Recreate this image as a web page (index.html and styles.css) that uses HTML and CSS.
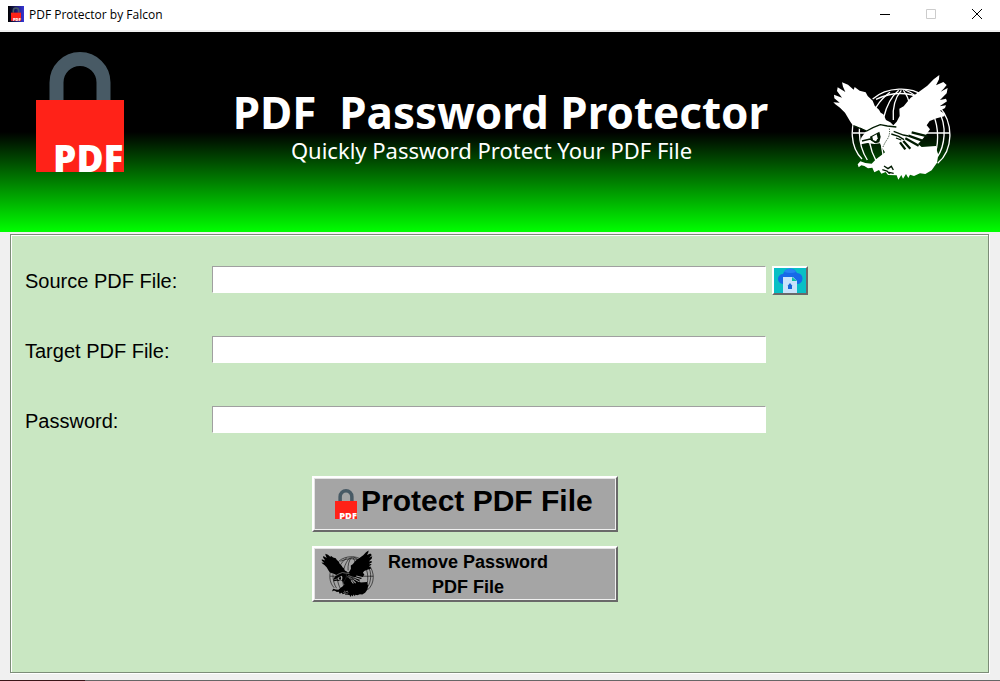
FILE: index.html
```html
<!DOCTYPE html>
<html lang="en">
<head>
<meta charset="utf-8">
<meta name="viewport" content="width=device-width, initial-scale=1">
<title>PDF Protector by Falcon</title>
<link rel="stylesheet" href="styles.css">
</head>
<body>
<svg class="sprite" aria-hidden="true">
  <symbol id="lock" viewBox="0 0 88 120" overflow="visible">
    <path d="M20.500 50V30.500a23.500 23.500 0 0 1 47 0V50" fill="none" stroke="#485a65" stroke-width="14"/>
    <path d="M0 48h88v72H0z" fill="#ff2218"/>
    <text class="lock-text" x="17" y="120">PDF</text>
  </symbol>
  <symbol id="falcon" viewBox="39 42 354 324">
    <g fill="none" stroke="currentColor" stroke-width="4">
      <path d="M126 297C91 262 87 197 116 153M158 117C202 79 274 80 307 106M358 140C402 190 400 270 353 310" />
      <path d="M142 300C110 250 112 180 136 143M168 302C134 240 138 150 210 97M190 290C172 210 195 125 236 91M220 180C217 145 225 113 244 91M250 91C261 105 267 120 268 135M255 90C290 103 302 120 306 134M340 165C358 205 356 260 341 290M354 150C384 198 373 260 352 291"/>
      <path d="M99 219H390M168 118Q240 84 306 116"/>
    </g>
    <path fill="currentColor" d="M66 67L84 74L101 89L104 81L119 92L137 97L143 108L158 122L164 137L177 149L182 158L190 163L198 180L211 187L220 196L230 185L239 168L238 146L251 139L272 113L292 99L322 77L341 58L358 45L357 58L348 76L370 66L380 75L371 86L362 95L383 84L380 100L360 120L378 116L381 124L359 139L378 136L375 144L360 152L375 162L373 169L350 175L329 183L320 196L330 208L320 222L306 239L294 252L305 261L348 258L351 273L355 284L351 308L335 331L316 342L300 340L282 348L270 344L265 354L258 342L249 356L244 345L235 359L230 346L204 345L197 336L184 341L177 330L163 337L157 323L144 325L133 318L124 316L116 322L113 313L121 304L136 309L155 311L168 298L184 286L195 277L185 262L180 250L163 252L142 249L123 253L121 241L125 231L139 213L122 203L100 198L91 185L75 158L60 143L46 133L40 127L59 128L43 115L42 104L66 113L51 93L53 82L76 96L69 80Z"/>
    <g fill="none" stroke="var(--detail)" stroke-width="4">
      <path d="M100 197L140 213Q158 202 181 194L202 198L229 201"/>
      <path d="M208 206Q211 225 201 239Q194 249 188 263" stroke-dasharray="3 4" stroke-width="3"/>
      <path d="M214 222L236 229L252 239M221 214L250 225L265 228M228 234L244 240"/>
      <path d="M126 243L150 237L166 247"/>
      <path d="M240 247L256 268M250 243L271 266M256 235L296 257M265 227L315 245M275 217L323 229" stroke-width="7"/>
      <path d="M192 318l12 8 10-7 6 11M187 329l14 4 8 8M207 337l14 3"/>
    </g>
    <path fill="var(--detail)" d="M150 230L178 215L182 230L178 247L167 250L152 240Z"/>
    <path fill="currentColor" d="M157 230L170 223L173 235L168 244L159 240Z"/>
  </symbol>
</svg>

<header class="titlebar">
  <svg class="app-icon" viewBox="0 0 16 16" aria-hidden="true">
    <defs><linearGradient id="appGradient"><stop offset="0"/><stop offset="1" stop-color="#3636d8"/></linearGradient></defs>
    <path fill="url(#appGradient)" d="M0 0h16v16H0z"/>
    <use href="#lock" x="3" y="1" width="10" height="14"/>
  </svg>
  <span class="window-title">PDF Protector by Falcon</span>
  <div class="window-controls">
    <button type="button" aria-label="Minimize"><svg viewBox="0 0 10 10"><path d="M0 5.500h10"/></svg></button>
    <button type="button" aria-label="Maximize" disabled><svg viewBox="0 0 10 10"><path d="M.5.5h9v9h-9z"/></svg></button>
    <button type="button" aria-label="Close"><svg viewBox="0 0 10 10"><path d="M0 0l10 10M10 0L0 10"/></svg></button>
  </div>
</header>

<section class="banner">
  <svg class="banner-lock" aria-hidden="true"><use href="#lock"/></svg>
  <div class="banner-copy">
    <h1>PDF&nbsp; Password Protector</h1>
    <p>Quickly Password Protect Your PDF File</p>
  </div>
  <svg class="banner-falcon" aria-hidden="true"><use href="#falcon"/></svg>
</section>

<main class="content">
  <form class="panel">
    <label for="source">Source PDF File:</label>
    <input id="source" type="text">
    <button class="browse" type="button" aria-label="Choose source file">
      <svg viewBox="0 0 32 25" aria-hidden="true">
        <path fill="#08bfc5" d="M0 0h32v25H0z"/>
        <path fill="#1769e8" d="M9 16a5 5 0 0 1 0-10 7.500 7.500 0 0 1 14-1 5.500 5.500 0 0 1 0 11z"/>
        <path fill="#2784f3" d="M10 4a7 7 0 0 1 12 0q-5 2-12 0z"/>
        <path fill="#c9e3fb" d="M9 9h10l4 4v12H9z"/>
        <path fill="#08bfa5" d="M18 9l5 4h-5z"/>
        <path fill="#1765d8" d="M16 15l2.500 3H18v3h-4v-3h-.5z"/>
      </svg>
    </button>
    <label for="target">Target PDF File:</label>
    <input id="target" type="text">
    <label for="password">Password:</label>
    <input id="password" type="password">
    <div class="actions">
      <button class="action protect" type="button">
        <svg class="button-lock" aria-hidden="true"><use href="#lock"/></svg>
        <span>Protect PDF File</span>
      </button>
      <button class="action remove" type="button">
        <svg class="button-falcon" aria-hidden="true"><use href="#falcon"/></svg>
        <span>Remove Password<br>PDF File</span>
      </button>
    </div>
  </form>
</main>
<div class="bottom-edge"></div>
</body>
</html>
```
FILE: styles.css
```css
* { box-sizing: border-box; }

body {
  margin: 0;
  min-height: 100vh;
  display: flex;
  flex-direction: column;
  background: #f0f0f0;
  color: #000;
  font-family: "Liberation Sans", Arial, sans-serif;
}

.sprite { position: absolute; width: 0; height: 0; }

.lock-text {
  font: 800 37px "Open Sans", sans-serif;
  fill: #fff;
}

.titlebar {
  display: flex;
  align-items: center;
  height: 32px;
  padding-left: 8px;
  padding-bottom: 2px;
  background: #fff;
  border-bottom: 2px solid #f0f0f0;
}
.app-icon { width: 16px; height: 16px; }
.window-title {
  margin-left: 5px;
  padding-top: 2px;
  font: 12px/16px "Open Sans", sans-serif;
}
.window-controls { display: flex; margin-left: auto; }
.window-controls button {
  display: grid;
  place-items: center;
  width: 46px;
  height: 28px;
  padding: 0;
  border: 0;
  background: none;
}
.window-controls svg {
  width: 10px;
  height: 10px;
  fill: none;
  stroke: #000;
  overflow: visible;
}
.window-controls button:disabled svg { stroke: #ccc; }

.banner {
  display: grid;
  grid-template-columns: 118px 1fr 118px;
  height: 200px;
  padding: 20px 49px 0 36px;
  background: linear-gradient(#000 50%, #0f0);
  color: #fff;
}
.banner-lock { width: 88px; height: 120px; overflow: visible; }
.banner-copy {
  padding: 33px 0 0 14px;
  text-align: center;
  font-family: "Noto Sans", sans-serif;
}
.banner h1 {
  margin: 0;
  font-size: 44px;
  font-weight: 700;
  line-height: 54px;
}
.banner p {
  margin: 0;
  padding-right: 18px;
  font-size: 22px;
  line-height: 22px;
}
.banner-falcon {
  --detail: #001a00;
  width: 118px;
  height: 108px;
  margin-top: 22px;
}

.content {
  flex: 1;
  display: flex;
  padding: 2px 11px 7px 10px;
}
.panel {
  flex: 1;
  display: grid;
  grid-template-columns: 181px minmax(0, 554px) 36px;
  grid-auto-rows: 30px;
  align-content: start;
  align-items: start;
  gap: 40px 6px;
  padding: 31px 14px;
  background: #c9e7c2;
  border: 1px solid #7c8d78;
  box-shadow: inset 1px 1px #fff, 1px 1px #fff;
}
.panel label {
  grid-column: 1;
  font-size: 20px;
  line-height: 30px;
}
.panel input {
  width: 100%;
  height: 27px;
  padding: 2px 4px;
  border: 1px solid;
  border-color: #a0a0a0 #fff #fff #a0a0a0;
  background: #fff;
  font: 20px "Liberation Sans", Arial, sans-serif;
}

.browse,
.action {
  padding: 0;
  border: 2px solid;
  border-color: #fff #696969 #696969 #fff;
}
.browse { width: 36px; height: 29px; }
.browse svg { display: block; width: 32px; height: 25px; }

.actions {
  grid-column: 2;
  justify-self: start;
  display: grid;
  gap: 14px;
  margin-left: 100px;
}
.action {
  display: flex;
  width: 306px;
  height: 56px;
  background: #a5a5a5;
  box-shadow: inset 1px 1px #e3e3e3, inset -1px -1px #f0f0f0;
  color: #000;
  font-family: "Liberation Sans", Arial, sans-serif;
  font-weight: 700;
}
.protect {
  padding-left: 21px;
  font-size: 30px;
  line-height: 45px;
}
.remove {
  padding-left: 7px;
  font-size: 18px;
  line-height: 25px;
}
.button-lock {
  width: 22px;
  height: 30px;
  margin: 11px 4px 0 0;
}
.button-falcon {
  --detail: #a5a5a5;
  width: 53px;
  height: 48px;
  margin: 2px 14px 0 0;
}
.remove span { padding-top: 2px; }

.bottom-edge {
  height: 1px;
  background: linear-gradient(90deg, #3a1518 85px, #666 85px);
}
```
